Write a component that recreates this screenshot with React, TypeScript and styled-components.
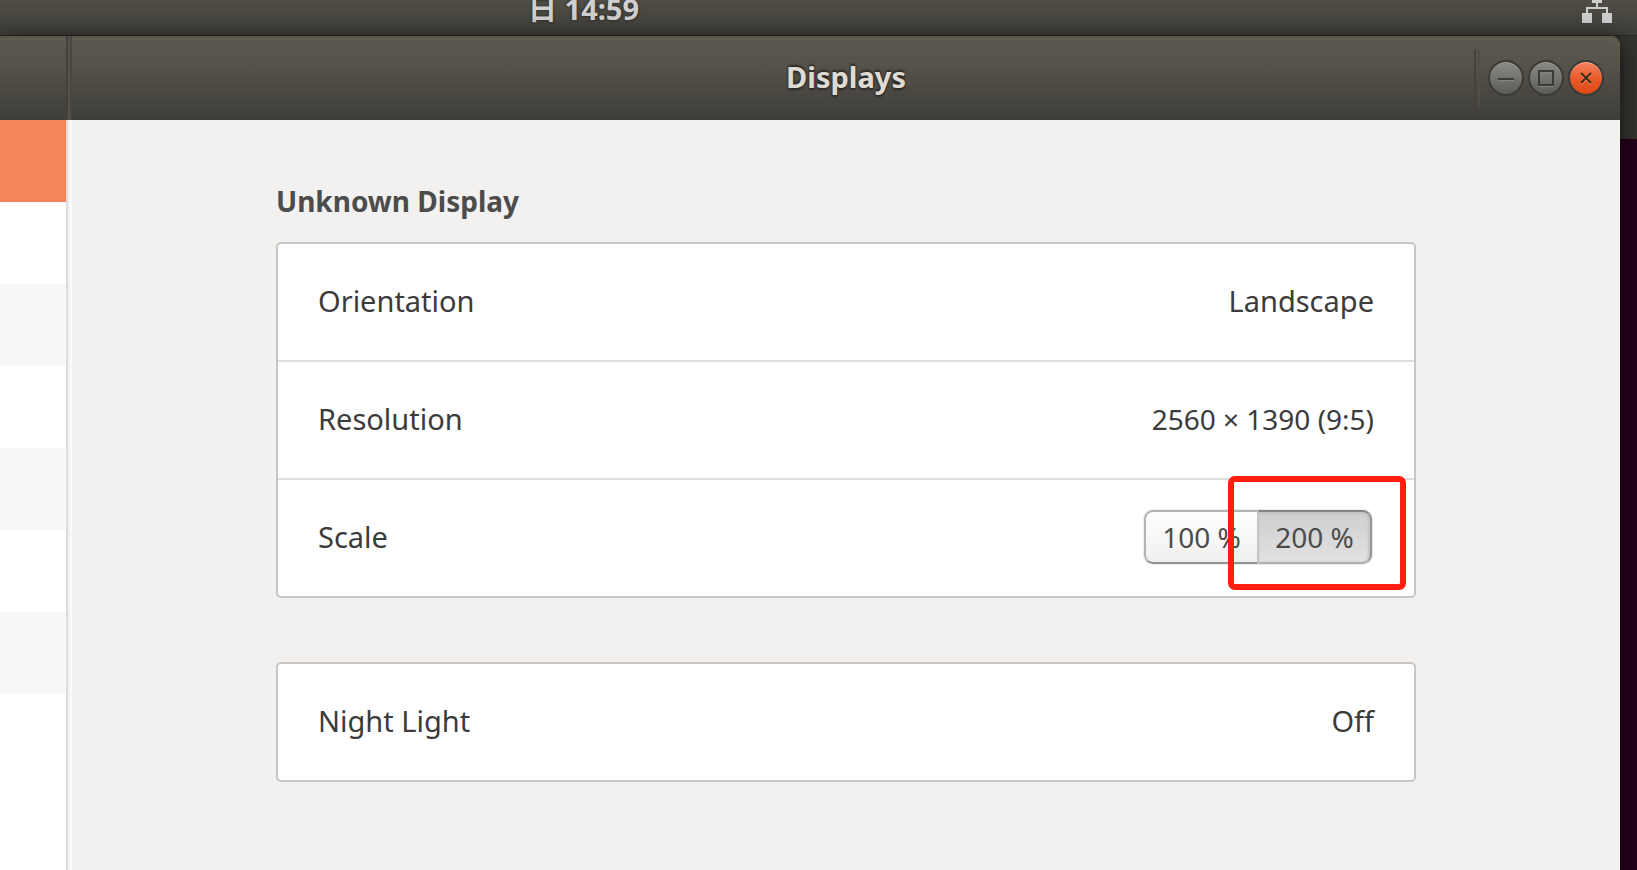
import React, { useState } from 'react';
import styled, { createGlobalStyle, css } from 'styled-components';

const GlobalStyle = createGlobalStyle`
  *, *::before, *::after { box-sizing: border-box; }
  body {
    margin: 0;
    background: #23001a;
    color: #3b3b3b;
    font-family: "Noto Sans", "Noto Sans CJK SC", sans-serif;
    font-size: 29px;
    line-height: 40px;
  }
  button { font: inherit; color: inherit; }
`;

const Desktop = styled.div`
  display: flex;
  flex-direction: column;
  min-height: 100vh;
  overflow: hidden;
`;

const TopBar = styled.header`
  display: flex;
  align-items: flex-start;
  justify-content: space-between;
  height: 36px;
  padding: 0 25px 0 528px;
  background: linear-gradient(#504e46, #3f3e39);
  border-bottom: 1px solid #2b2a27;
`;

const Clock = styled.time`
  color: #d0d0d0;
  font-weight: 700;
  line-height: 18px;
  text-shadow: 0 0 3px rgba(0, 0, 0, 0.6);
`;

const NetworkIcon = styled.svg`
  width: 30px;
  height: 23px;
  fill: #cdcdcd;
`;

const Workspace = styled.div`
  flex: 1;
  display: flex;
  padding-right: 17px;
  background: linear-gradient(#353430, #35342f) 0 0 / 100% 103px no-repeat #23001a;
`;

const Window = styled.section`
  flex: 1;
  display: flex;
  flex-direction: column;
  border-radius: 0 10px 0 0;
  background: #f2f1f0;
  box-shadow: 0 4px 24px rgba(0, 0, 0, 0.7);
`;

const TitleBar = styled.div`
  display: flex;
  height: 84px;
  border-radius: 0 10px 0 0;
  background: linear-gradient(#5b584e, #55524a 35%, #3e3d38);
  box-shadow: inset 0 2px #58554c, inset 0 4px #5f5d50;
`;

const TitleBarSide = styled.div`
  width: 72px;
  border-right: 2px solid #494740;
  background: linear-gradient(90deg, transparent 66px, #43413c 66px, #43413c 68px, #55524b 68px);
`;

const TitleBarMain = styled.div`
  flex: 1;
  display: grid;
  grid-template-columns: 1fr auto 1fr;
  align-items: center;
  padding-right: 16px;
  padding-left: 16px;
`;

const Title = styled.h1`
  grid-column: 2;
  margin: 0;
  padding-bottom: 2px;
  color: #dfdbd2;
  font-size: 29px;
  line-height: 40px;
  text-shadow: 0 0 2px #2d2c28, 0 -2px 2px #2d2c28, 0 2px 2px #2d2c28;
`;

const WindowControls = styled.div`
  justify-self: end;
  display: flex;
  align-items: center;
  gap: 4px;
`;

const ControlDivider = styled.span`
  width: 6px;
  height: 56px;
  margin-right: 4px;
  border: solid #444239;
  border-width: 0 2px;
  border-right-color: #504e47;
`;

const ControlButton = styled.button<{ $close?: boolean }>`
  display: grid;
  place-items: center;
  width: 36px;
  height: 36px;
  padding: 0;
  border: 2px solid #3c3b37;
  border-radius: 50%;
  background: ${p => (p.$close ? 'linear-gradient(#f5825f, #e95b2c 50%, #df4a16)' : 'linear-gradient(#8b8a84, #74736e 50%, #5d5c57)')};
  background-clip: padding-box;
  box-shadow: inset 0 1px ${p => (p.$close ? '#f9a58b' : '#9c9b95')};

  svg {
    width: 16px;
    height: 16px;
    fill: none;
    stroke: ${p => (p.$close ? '#3d2c14' : '#3c3b37')};
    stroke-width: 2;
    filter: drop-shadow(0 1px ${p => (p.$close ? '#f5936f' : '#84837d')});
  }
`;

const Body = styled.div`
  flex: 1;
  display: flex;
`;

const Sidebar = styled.nav`
  width: 68px;
  border-right: 2px solid #dddddc;
  background: #fff;
`;

const SidebarRow = styled.div<{ $selected?: boolean }>`
  height: 82px;
  background: #fff;

  &:nth-child(odd):not(:last-child) { background: #f7f7f7; }
  ${p => p.$selected && css`&&:first-child { background: #f48459; }`}
`;

const Pane = styled.main`
  flex: 1;
  margin-left: 2px;
  padding: 61px 20px 40px;
  border-left: 2px solid #fafafa;
`;

const Column = styled.div`
  max-width: 1140px;
  margin: 0 auto;
`;

const Heading = styled.h2`
  margin: 0 0 21px;
  color: #4c4c4c;
  font-size: 28px;
  line-height: 40px;
`;

const Card = styled.div`
  border: 2px solid #c8c5c2;
  border-radius: 5px;
  background: #fff;

  & + & { margin-top: 64px; }
`;

const rowLayout = css`
  display: flex;
  align-items: center;
  justify-content: space-between;
  width: 100%;
  height: 116px;
  padding: 0 40px 2px;
`;

const Row = styled.div`
  ${rowLayout}
`;

const ActionRow = styled.button`
  ${rowLayout}
  border: 0;
  background: none;
`;

const NumericValue = styled.span`
  font-size: 28px;
`;

const RowDivider = styled.hr`
  height: 2px;
  margin: 0;
  border: 0;
  background: #dddddd;
`;

const Segmented = styled.div`
  display: flex;
  height: 54px;
  margin-right: 2px;
  border-radius: 9px;
  box-shadow: 0 0 0 1px #ececeb;
  color: #4c4c4c;
  font-size: 28px;
`;

const Segment = styled.button`
  width: 113px;
  padding: 0;
  border: 2px solid #b4b3b2;
  border-bottom-color: #949392;
  background: linear-gradient(#fff, #f0efee);

  &:first-child { border-right: 0; border-radius: 9px 0 0 9px; }
  &[aria-pressed='true'] {
    border-color: #868686 #959595 #b0b0b0 #c4c4c4;
    background: linear-gradient(#cecece, #e2e2e2);
    box-shadow: inset 0 2px 2px #c2c2c2, inset -2px 0 2px #c6c6c6;
  }
`;

const HighlightTarget = styled.span`
  position: relative;
  display: flex;

  ${Segment}:first-child {
    width: 115px;
    border-right: 2px solid #959595;
    border-radius: 0 9px 9px 0;
  }
`;

const Highlight = styled.span`
  position: absolute;
  inset: -34px -34px -26px -29px;
  border: 6px solid #ff1e10;
  border-radius: 7px;
  pointer-events: none;
`;

export default function App() {
  const [scale, setScale] = useState(200);

  return (
    <>
      <GlobalStyle />
      <Desktop>
        <TopBar>
          <Clock dateTime="14:59">日 14:59</Clock>
          <NetworkIcon viewBox="0 7 30 23" role="img" aria-label="Wired network">
            <path d="M10 0h10v10h-10zM14 10h2v4h-2zM4 14h22v2H4zM4 14h2v6H4zM24 14h2v6h-2zM0 20h10v10H0zM20 20h10v10H20z" />
          </NetworkIcon>
        </TopBar>
        <Workspace>
          <Window>
            <TitleBar>
              <TitleBarSide />
              <TitleBarMain>
                <Title>Displays</Title>
                <WindowControls>
                  <ControlDivider />
                  <ControlButton aria-label="Minimize">
                    <svg viewBox="0 0 16 16"><path d="M0 9h16" /></svg>
                  </ControlButton>
                  <ControlButton aria-label="Maximize">
                    <svg viewBox="0 0 16 16"><path d="M1 1h14v14H1z" /></svg>
                  </ControlButton>
                  <ControlButton $close aria-label="Close">
                    <svg viewBox="0 0 16 16"><path d="M3 3l10 10M13 3L3 13" /></svg>
                  </ControlButton>
                </WindowControls>
              </TitleBarMain>
            </TitleBar>
            <Body>
              <Sidebar>
                <SidebarRow $selected />
                {[1, 2, 3, 4, 5, 6].map(i => <SidebarRow key={i} />)}
                <SidebarRow />
              </Sidebar>
              <Pane>
                <Column>
                  <Heading>Unknown Display</Heading>
                  <Card>
                    <ActionRow><span>Orientation</span><span>Landscape</span></ActionRow>
                    <RowDivider />
                    <ActionRow><span>Resolution</span><NumericValue>2560 × 1390 (9:5)</NumericValue></ActionRow>
                    <RowDivider />
                    <Row>
                      <span id="scale-label">Scale</span>
                      <Segmented role="group" aria-labelledby="scale-label">
                        <Segment aria-pressed={scale === 100} onClick={() => setScale(100)}>100 %</Segment>
                        <HighlightTarget>
                          <Segment aria-pressed={scale === 200} onClick={() => setScale(200)}>200 %</Segment>
                          <Highlight />
                        </HighlightTarget>
                      </Segmented>
                    </Row>
                  </Card>
                  <Card>
                    <ActionRow><span>Night Light</span><span>Off</span></ActionRow>
                  </Card>
                </Column>
              </Pane>
            </Body>
          </Window>
        </Workspace>
      </Desktop>
    </>
  );
}
